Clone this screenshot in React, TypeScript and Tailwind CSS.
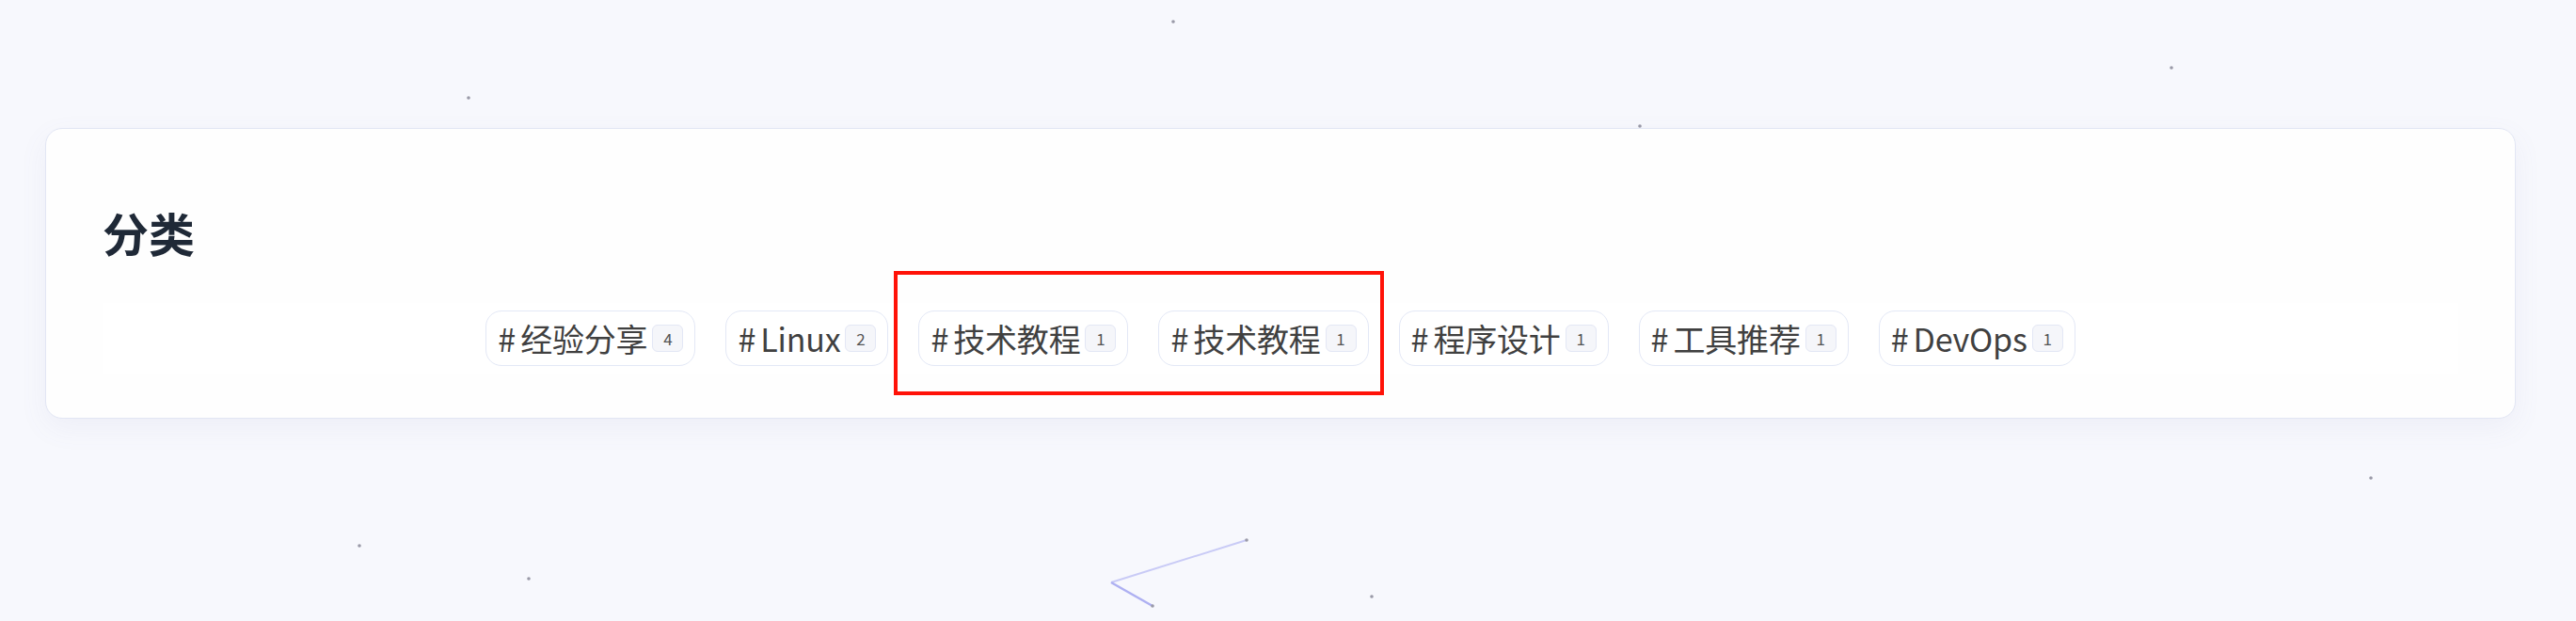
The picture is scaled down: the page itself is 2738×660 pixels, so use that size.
const categories = [
  { name: "经验分享", count: 4 },
  { name: "Linux", count: 2 },
  { name: "技术教程", count: 1 },
  { name: "技术教程", count: 1 },
  { name: "程序设计", count: 1 },
  { name: "工具推荐", count: 1 },
  { name: "DevOps", count: 1 },
]

const dots = [
  [1247, 23],
  [498, 104],
  [2308, 72],
  [1743, 134],
  [382, 580],
  [562, 615],
  [1325, 574],
  [1458, 634],
  [2520, 508],
  [1225, 644],
]

function Tag({ name, count }: { name: string; count: number }) {
  return (
    <a
      href="#"
      className="flex h-[59px] items-center rounded-[17px] border border-[#e3e8f6] bg-white pl-[12px] pr-[12px] text-[34px] leading-none text-[#404040]"
    >
      <span className="mr-[5px]">#</span>
      <span className="tracking-[-0.2px]">{name}</span>
      <span className="ml-[5px] flex h-[29px] w-[33px] items-center justify-center rounded-[6px] border border-[#e3e7f5] bg-[#f5f6fa] text-[17px] text-[#555]">
        {count}
      </span>
    </a>
  )
}

export default function App() {
  const first = categories.slice(0, 2)
  const marked = categories.slice(2, 4)
  const rest = categories.slice(4)

  return (
    <div
      className="relative min-h-[660px] overflow-hidden bg-[#f7f8fd]"
      style={{ fontFamily: '"Noto Sans CJK SC", "Noto Sans", sans-serif' }}
    >
      {/* particle background */}
      <svg className="absolute inset-0 h-[660px] w-[2738px]" viewBox="0 0 2738 660">
        <line x1="1181" y1="619" x2="1325" y2="574" stroke="#c9cbf6" strokeWidth="2" />
        <line x1="1181" y1="619" x2="1225" y2="644" stroke="#aeb0f2" strokeWidth="2.5" />
        {dots.map(([x, y], i) => (
          <circle key={i} cx={x} cy={y} r="1.8" fill="#9a9aa8" />
        ))}
      </svg>

      <div className="relative pt-[136px]">
        <section className="ml-[48px] w-[2626px] rounded-[18px] border border-[#e2e6f4] bg-[#fefefe] px-[60px] pt-[85px] pb-[47px] shadow-[0_10px_30px_rgba(110,120,170,0.07)]">
          <h2 className="text-[49px] font-bold leading-none text-[#1f2937]">分类</h2>

          <div className="mt-[51px] flex justify-center gap-[32px] bg-white py-[8px]">
            {first.map((c, i) => (
              <Tag key={i} {...c} />
            ))}
            <div className="relative flex gap-[32px]">
              {marked.map((c, i) => (
                <Tag key={i} {...c} />
              ))}
              <div className="pointer-events-none absolute -top-[42px] -right-[16px] -bottom-[31px] -left-[26px] border-[4px] border-[#ff1208]" />
            </div>
            {rest.map((c, i) => (
              <Tag key={i} {...c} />
            ))}
          </div>
        </section>
      </div>
    </div>
  )
}
